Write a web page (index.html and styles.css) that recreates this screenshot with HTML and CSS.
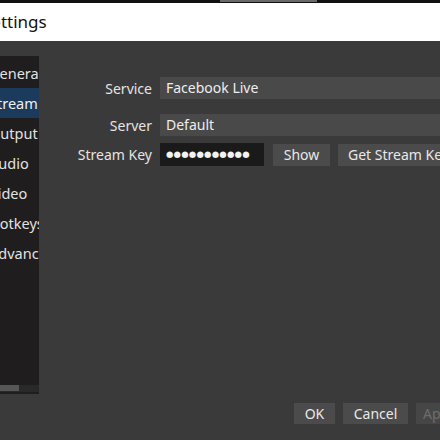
FILE: index.html
```html
<!DOCTYPE html>
<html>
<head>
<meta charset="utf-8">
<link rel="stylesheet" href="styles.css">
</head>
<body>
<div class="topstrip"><div class="strip-gray"></div></div>
<div class="titlebar"><span class="title">Settings</span></div>
<div class="main">
  <div class="sidebar">
    <ul class="nav">
      <li>General</li>
      <li class="active">Stream</li>
      <li>Output</li>
      <li>Audio</li>
      <li>Video</li>
      <li>Hotkeys</li>
      <li>Advanced</li>
    </ul>
    <div class="hscroll"><div class="thumb"></div></div>
  </div>
  <div class="content">
    <div class="form">
      <div class="row r-service">
        <label class="lbl">Service</label>
        <div class="field combo">Facebook Live</div>
      </div>
      <div class="row r-server">
        <label class="lbl">Server</label>
        <div class="field combo">Default</div>
      </div>
      <div class="row r-key">
        <label class="lbl">Stream Key</label>
        <div class="keyline">
          <div class="keyfield">●●●●●●●●●●●</div>
          <button class="btn show">Show</button>
          <button class="btn getkey">Get Stream Key</button>
        </div>
      </div>
    </div>
    <div class="buttons">
      <button class="btn ok">OK</button>
      <button class="btn cancel">Cancel</button>
      <button class="btn apply" disabled>Apply</button>
    </div>
  </div>
</div>
</body>
</html>
```
FILE: styles.css
```css
html, body {
  margin: 0;
  padding: 0;
  width: 440px;
  height: 440px;
  overflow: hidden;
  background: #3b3a3a;
  font-family: "Noto Sans", "Open Sans", sans-serif;
}
.topstrip {
  height: 3px;
  background: #111;
  display: flex;
}
.strip-gray {
  margin-left: 220px;
  width: 97px;
  height: 2px;
  background: #6a6a6a;
}
.titlebar {
  height: 38px;
  background: #ffffff;
  display: flex;
  align-items: center;
  overflow: hidden;
}
.title {
  margin-left: -18px;
  font-size: 17px;
  color: #111;
  position: relative;
  top: -1px;
}
.main {
  display: flex;
  height: 399px;
  background: #3b3a3a;
}
.sidebar {
  margin-top: 15px;
  margin-left: -10px;
  width: 49px;
  flex: none;
  height: 338px;
  background: #1f1d1e;
  display: flex;
  flex-direction: column;
  overflow: hidden;
}
.nav {
  list-style: none;
  margin: 0;
  padding: 2px 0 0 0;
  flex: 1;
}
.nav li {
  height: 30px;
  line-height: 30px;
  font-size: 14.5px;
  color: #e2e2e2;
  white-space: nowrap;
  text-indent: -1px;
}
.nav li.active {
  background: #1c3a5c;
  color: #f0f0f0;
}
.hscroll {
  height: 7px;
  margin-bottom: 2px;
  background: #2a2929;
}
.thumb {
  margin-left: 10px;
  width: 19px;
  height: 6px;
  background: #575656;
}
.content {
  flex: none;
  width: 520px;
  display: flex;
  flex-direction: column;
}
.form {
  padding-top: 36px;
  display: flex;
  flex-direction: column;
}
.row {
  display: flex;
  align-items: center;
  gap: 8px;
}
.r-server { margin-top: 15px; }
.r-key { margin-top: 7px; }
.lbl {
  width: 113px;
  flex: none;
  text-align: right;
  font-size: 14px;
  color: #e4e4e4;
}
.field {
  flex: 1;
  height: 22px;
  line-height: 22px;
  background: #4a4949;
  color: #ededed;
  font-size: 14px;
  padding-left: 6px;
}
.keyline {
  display: flex;
  align-items: center;
}
.keyfield {
  width: 98px;
  height: 23px;
  line-height: 23px;
  background: #1b1a1b;
  color: #f2f2f2;
  font-family: "DejaVu Sans", sans-serif;
  font-size: 8.5px;
  letter-spacing: 0.2px;
  padding-left: 6px;
  white-space: nowrap;
  overflow: hidden;
}
.btn {
  font-family: inherit;
  font-size: 14px;
  color: #e8e8e8;
  background: #4c4b4b;
  border: none;
  padding: 0;
  height: 22px;
  line-height: 22px;
  margin: 0;
}
.show {
  margin-left: 9px;
  width: 57px;
}
.getkey {
  margin-left: 8px;
  width: 124px;
  text-align: left;
  padding-left: 10px;
}
.buttons {
  margin-top: auto;
  margin-bottom: 16px;
  padding-left: 255px;
  display: flex;
  gap: 8px;
}
.ok { width: 41px; height: 21px; line-height: 21px; }
.cancel { width: 65px; height: 21px; line-height: 21px; }
.apply {
  width: 60px;
  height: 21px;
  line-height: 21px;
  color: #6e6d6d;
  background: #474646;
  text-align: left;
  padding-left: 7px;
}
```
